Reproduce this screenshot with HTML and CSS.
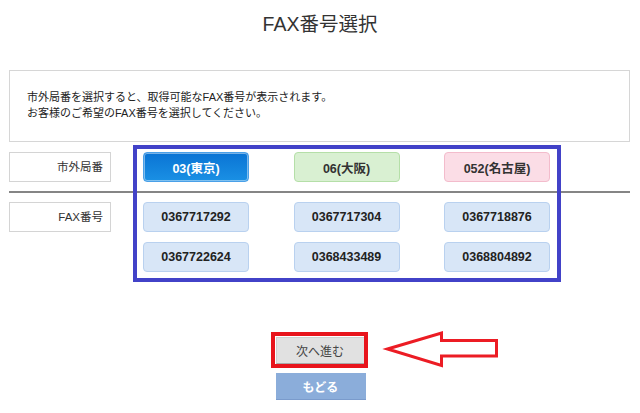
FILE: index.html
```html
<!DOCTYPE html>
<html lang="ja">
<head>
<meta charset="utf-8">
<title>FAX番号選択</title>
<link rel="stylesheet" href="styles.css">
</head>
<body>
<h1 class="title">FAX番号選択</h1>
<div class="info">
  <p>市外局番を選択すると、取得可能なFAX番号が表示されます。</p>
  <p>お客様のご希望のFAX番号を選択してください。</p>
</div>
<div class="select">
  <div class="row">
    <div class="label">市外局番</div>
    <div class="grid">
      <button class="btn area-tokyo">03(東京)</button>
      <button class="btn area-osaka">06(大阪)</button>
      <button class="btn area-nagoya">052(名古屋)</button>
    </div>
  </div>
  <div class="sep"></div>
  <div class="row">
    <div class="label">FAX番号</div>
    <div class="grid">
      <button class="btn num">0367717292</button>
      <button class="btn num">0367717304</button>
      <button class="btn num">0367718876</button>
      <button class="btn num">0367722624</button>
      <button class="btn num">0368433489</button>
      <button class="btn num">0368804892</button>
    </div>
  </div>
  <div class="highlight-blue"></div>
</div>
<div class="actions">
  <div class="next-wrap">
    <button class="next">次へ進む</button>
    <div class="highlight-red"></div>
  </div>
  <button class="back">もどる</button>
  <svg class="arrow" width="125" height="50" viewBox="0 0 125 50">
    <polygon points="7.5,24 61.5,8 61.5,15.5 116.5,15.5 116.5,31 61.5,31 61.5,40.5" fill="none" stroke="#ec1c24" stroke-width="3" stroke-linejoin="miter" stroke-miterlimit="10"/>
  </svg>
</div>
</body>
</html>
```
FILE: styles.css
```css
html, body {
  margin: 0;
  padding: 0;
  background: #fff;
}
body {
  font-family: "Liberation Sans", "Noto Sans CJK JP", sans-serif;
  color: #333;
  width: 640px;
}
.title {
  margin: 0;
  padding-top: 12px;
  font-size: 19.5px;
  line-height: 24px;
  font-weight: normal;
  text-align: center;
  color: #333;
}
.info {
  margin: 34px 10px 0 9px;
  border: 1px solid #d6d6d6;
  padding: 18px 17px 20px 17px;
  font-size: 11px;
  line-height: 16px;
  color: #222;
}
.info p {
  margin: 0;
}
.select {
  position: relative;
  margin-top: 10px;
}
.row {
  display: flex;
  align-items: flex-start;
}
.label {
  margin-left: 9px;
  width: 102px;
  height: 30px;
  box-sizing: border-box;
  border: 1px solid #d4d4d4;
  text-align: right;
  padding-right: 7px;
  line-height: 28px;
  font-size: 11.5px;
  color: #333;
}
.grid {
  margin-left: 32px;
  display: grid;
  grid-template-columns: repeat(3, 106px);
  column-gap: 44.5px;
  row-gap: 10px;
}
.btn {
  height: 30px;
  box-sizing: border-box;
  border-radius: 4px;
  border: 1px solid #b9d1ef;
  font-family: "Liberation Sans", "Noto Sans CJK JP", sans-serif;
  font-size: 12.5px;
  font-weight: bold;
  color: #222;
  padding: 0;
  cursor: pointer;
}
.area-tokyo {
  background: linear-gradient(#0a74d4, #1a90e4);
  border-color: #4aa0e8;
  box-shadow: inset 0 0 0 1px rgba(255, 255, 255, 0.45);
  color: #fff;
}
.area-osaka {
  background: #d9f0d2;
  border-color: #b5dfa8;
  color: #333;
}
.area-nagoya {
  background: #fbdde6;
  border-color: #f3bccc;
  color: #333;
}
.num {
  background: #d8e6f7;
  border-color: #b9d1ef;
}
.sep {
  margin: 9px 10px 9px 9px;
  border-top: 2px solid #858585;
}
.highlight-blue {
  position: absolute;
  left: 133px;
  top: -7px;
  width: 428px;
  height: 137px;
  box-sizing: border-box;
  border: 4px solid #4242c8;
  pointer-events: none;
}
.actions {
  position: relative;
  margin-top: 65px;
  display: flex;
  flex-direction: column;
  align-items: center;
  gap: 9px;
}
.next-wrap {
  position: relative;
}
.next {
  display: block;
  width: 89px;
  height: 27px;
  box-sizing: border-box;
  background: #e1e1e1;
  border: 1px solid #d0d0d0;
  border-right-color: #a8a8a8;
  border-bottom-color: #a8a8a8;
  font-family: "Noto Sans CJK JP", sans-serif;
  font-size: 12px;
  color: #444;
  padding: 0;
}
.highlight-red {
  position: absolute;
  left: -5px;
  top: -5px;
  width: 97px;
  height: 36px;
  box-sizing: border-box;
  border: 4px solid #e8141c;
  pointer-events: none;
}
.back {
  display: block;
  width: 90px;
  height: 27px;
  box-sizing: border-box;
  margin-left: 1px;
  background: #8badda;
  border: none;
  border-bottom: 1px solid #7a9bcc;
  font-family: "Noto Sans CJK JP", sans-serif;
  font-size: 12px;
  font-weight: bold;
  color: #fff;
  padding: 0;
}
.arrow {
  position: absolute;
  left: 380px;
  top: -12px;
}
```
